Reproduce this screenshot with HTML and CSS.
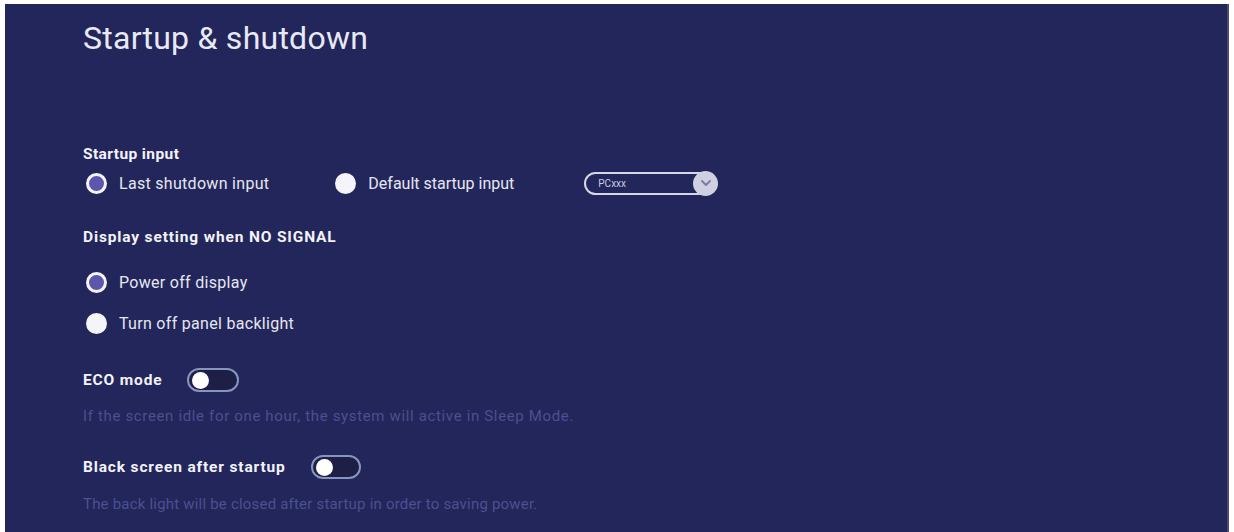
FILE: index.html
```html
<!DOCTYPE html>
<html lang="en">
<head>
  <meta charset="UTF-8">
  <title>Startup &amp; shutdown</title>
  <link rel="stylesheet" href="styles.css">
</head>
<body>
  <div class="painel">
    <h1 class="titulo">Startup &amp; shutdown</h1>

    <div class="secao secao-input">Startup input</div>
    <div class="linha linha-input">
      <label class="opcao">
        <span class="radio marcado"></span>
        <span>Last shutdown input</span>
      </label>
      <label class="opcao opcao-default">
        <span class="radio"></span>
        <span>Default startup input</span>
      </label>
      <div class="seletor">
        <span class="seletor-texto">PCxxx</span>
        <span class="seletor-botao">
          <svg width="12" height="8" viewBox="0 0 12 8"><path d="M2 2 L6 6 L10 2" fill="none" stroke="#7b7ea6" stroke-width="2" stroke-linecap="round" stroke-linejoin="round"/></svg>
        </span>
      </div>
    </div>

    <div class="secao secao-sinal">Display setting when NO SIGNAL</div>
    <label class="opcao linha-power">
      <span class="radio marcado"></span>
      <span>Power off display</span>
    </label>
    <label class="opcao linha-backlight">
      <span class="radio"></span>
      <span>Turn off panel backlight</span>
    </label>

    <div class="secao secao-eco">
      <span>ECO mode</span>
      <span class="chave chave-eco"><span class="chave-bola"></span></span>
    </div>
    <div class="descricao desc-eco">If the screen idle for one hour, the system will active in Sleep Mode.</div>

    <div class="secao secao-black">
      <span>Black screen after startup</span>
      <span class="chave"><span class="chave-bola"></span></span>
    </div>
    <div class="descricao desc-black">The back light will be closed after startup in order to saving power.</div>
  </div>
</body>
</html>
```

FILE: styles.css
```css
:root {
  --fundo: #ffffff;
  --painel: #23265a;
  --texto: #e6e6f1;
  --titulo: #e9e9f5;
  --fraco: #4b5091;
  --roxo: #5b57ad;
}

body {
  margin: 0;
  background-color: var(--fundo);
  font-family: Roboto, 'Liberation Sans', sans-serif;
  color: var(--texto);
}

.painel {
  margin: 4px 5px 0 5px;
  height: 528px;
  background-color: var(--painel);
  padding: 14px 0 0 78px;
  box-sizing: border-box;
  border-right: 2px solid #4a4c6e;
}

.titulo {
  margin: 0;
  font-size: 32px;
  font-weight: 400;
  letter-spacing: 0.25px;
  line-height: 40px;
  color: var(--titulo);
}

.secao {
  display: flex;
  align-items: center;
  height: 24px;
  font-size: 15.5px;
  font-weight: 700;
  letter-spacing: 0.85px;
  color: #f2f2f8;
}

.secao-input { margin-top: 84px; letter-spacing: 0.4px; }
.secao-sinal { margin-top: 30px; }
.secao-eco { margin-top: 33px; gap: 25px; }
.secao-black { margin-top: 27px; gap: 25px; }

.linha {
  display: flex;
  align-items: center;
  height: 24px;
}

.linha-input { margin-top: 5px; }

.opcao {
  display: flex;
  align-items: center;
  gap: 12px;
  height: 24px;
  font-size: 16px;
  letter-spacing: 0.3px;
}

.opcao-default { margin-left: 63px; letter-spacing: 0; }

.linha-power { margin-top: 21px; }
.linha-backlight { margin-top: 17px; }

.radio {
  width: 21px;
  height: 21px;
  border-radius: 50%;
  background-color: #f4f4fa;
  margin-left: 3px;
  box-sizing: border-box;
}

.radio.marcado {
  background-color: var(--roxo);
  border: 3px solid #f4f4fa;
}

.seletor {
  display: flex;
  align-items: center;
  justify-content: space-between;
  margin-left: 70px;
  width: 132px;
  height: 23px;
  box-sizing: border-box;
  border: 2px solid #d6d7e6;
  border-radius: 12px;
}

.seletor-texto {
  font-size: 10px;
  color: #c9cbe0;
  padding-left: 12px;
}

.seletor-botao {
  display: flex;
  align-items: center;
  justify-content: center;
  width: 25px;
  height: 25px;
  border-radius: 50%;
  background-color: #cfd0e2;
  margin-right: -4px;
}

.chave {
  display: flex;
  align-items: center;
  width: 50px;
  height: 24px;
  box-sizing: border-box;
  border: 2px solid #8595bb;
  border-radius: 12px;
  background-color: #1d1f47;
  padding-left: 3px;
}

.chave-eco { width: 52px; }

.chave-bola {
  width: 17px;
  height: 17px;
  border-radius: 50%;
  background-color: #ffffff;
}

.descricao {
  height: 24px;
  line-height: 24px;
  font-size: 15px;
  color: var(--fraco);
}

.desc-eco { margin-top: 12px; letter-spacing: 0.65px; }
.desc-black { margin-top: 13px; letter-spacing: 0.2px; }
```
